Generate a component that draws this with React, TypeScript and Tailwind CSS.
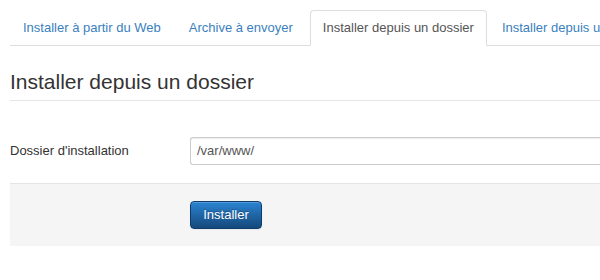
import React from "react";

export default function App() {
  const tabs = [
    "Installer à partir du Web",
    "Archive à envoyer",
    "Installer depuis un dossier",
    "Installer depuis une URL",
  ];
  return (
    <div className="w-[600px] h-[280px] overflow-hidden bg-white text-[13px] text-[#333]" style={{ fontFamily: '"Liberation Sans", Arial, sans-serif' }}>
      <div className="pl-[10px] pt-[10px]">
        <ul className="flex border-b border-[#ddd] whitespace-nowrap">
          {tabs.map((t, i) =>
            i === 2 ? (
              <li key={t} className="mr-[2px] -mb-px">
                <div className="px-[12px] py-[8px] leading-[18px] border border-[#ddd] border-b-transparent rounded-t-[4px] bg-white text-[#555]">
                  {t}
                </div>
              </li>
            ) : (
              <li key={t} className={i === 1 ? "mr-[4px] -mb-px" : "mr-[2px] -mb-px"}>
                <div className="px-[12px] py-[8px] leading-[18px] border border-transparent text-[#3a7fc0]">
                  {t}
                </div>
              </li>
            )
          )}
        </ul>
        <div className="mt-[18px] text-[21px] leading-[36px] text-[#333] border-b border-[#e5e5e5]">
          Installer depuis un dossier
        </div>
        <div className="mt-[36px] flex items-center">
          <label className="w-[180px] shrink-0 leading-[18px]">Dossier d'installation</label>
          <div className="flex-1 h-[28px] border border-[#ccc] rounded-l-[3px] border-r-0 shadow-[inset_0_1px_1px_rgba(0,0,0,0.075)] px-[6px] flex items-center text-[#555]">
            /var/www/
          </div>
        </div>
        <div className="mt-[18px] h-[63px] bg-[#f5f5f5] border-t border-[#e5e5e5] pl-[180px] pt-[17px]">
          <button className="h-[28px] w-[72px] rounded-[4px] border border-[#0f3d6b] text-white text-[13px] leading-[18px] bg-gradient-to-b from-[#2a84d2] to-[#15497c] shadow-[inset_0_1px_0_rgba(255,255,255,0.2),0_1px_2px_rgba(0,0,0,0.05)]" style={{ textShadow: "0 -1px 0 rgba(0,0,0,0.25)" }}>
            Installer
          </button>
        </div>
      </div>
    </div>
  );
}
